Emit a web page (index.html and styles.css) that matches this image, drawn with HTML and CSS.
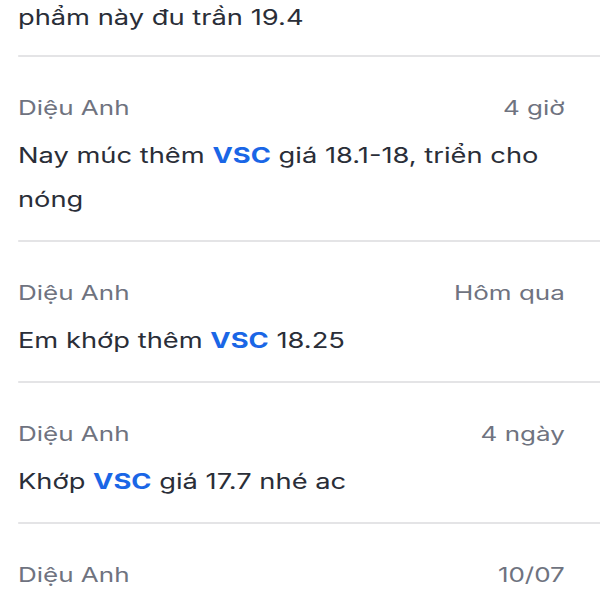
FILE: index.html
```html
<!DOCTYPE html>
<html lang="vi">
<head>
<meta charset="utf-8">
<link rel="stylesheet" href="styles.css">
</head>
<body>
<div class="list">
  <div class="item partial">
    <div class="msg">phẩm này đu trần 19.4</div>
  </div>
  <div class="item">
    <div class="head"><span class="name">Diệu Anh</span><span class="time">4 giờ</span></div>
    <div class="msg">Nay múc thêm <b class="tag">VSC</b> giá 18.1-18, triển cho nóng</div>
  </div>
  <div class="item">
    <div class="head"><span class="name">Diệu Anh</span><span class="time">Hôm qua</span></div>
    <div class="msg">Em khớp thêm <b class="tag">VSC</b> 18.25</div>
  </div>
  <div class="item">
    <div class="head"><span class="name">Diệu Anh</span><span class="time">4 ngày</span></div>
    <div class="msg">Khớp <b class="tag">VSC</b> giá 17.7 nhé ac</div>
  </div>
  <div class="item last">
    <div class="head"><span class="name">Diệu Anh</span><span class="time">10/07</span></div>
  </div>
</div>
</body>
</html>
```
FILE: styles.css
```css
html, body {
  margin: 0;
  padding: 0;
  background: #ffffff;
  height: 600px;
  overflow: hidden;
}
body {
  font-family: Inter, "Noto Sans", sans-serif;
}
/* the source view is rendered horizontally widened */
.list {
  width: 461.5px;
  display: flex;
  flex-direction: column;
  padding-left: 13.8px;
  box-sizing: border-box;
  transform: scaleX(1.3);
  transform-origin: 0 0;
}
.item {
  border-bottom: 2px solid #e4e4e6;
  padding: 37px 27px 18px 0;
}
.item.partial {
  padding-top: 0;
  padding-bottom: 19px;
}
.item.partial .msg {
  line-height: 36px;
}
.item.last {
  border-bottom: none;
  padding-bottom: 0;
}
.head {
  display: flex;
  justify-content: space-between;
  align-items: center;
  line-height: 28px;
  font-size: 20px;
  color: #6f7380;
  margin-bottom: 12px;
}
.item.last .head {
  margin-bottom: 0;
}
.msg {
  font-size: 21px;
  line-height: 44px;
  color: #2a2e38;
}
.tag {
  color: #1a66e6;
  font-weight: 700;
}
```
